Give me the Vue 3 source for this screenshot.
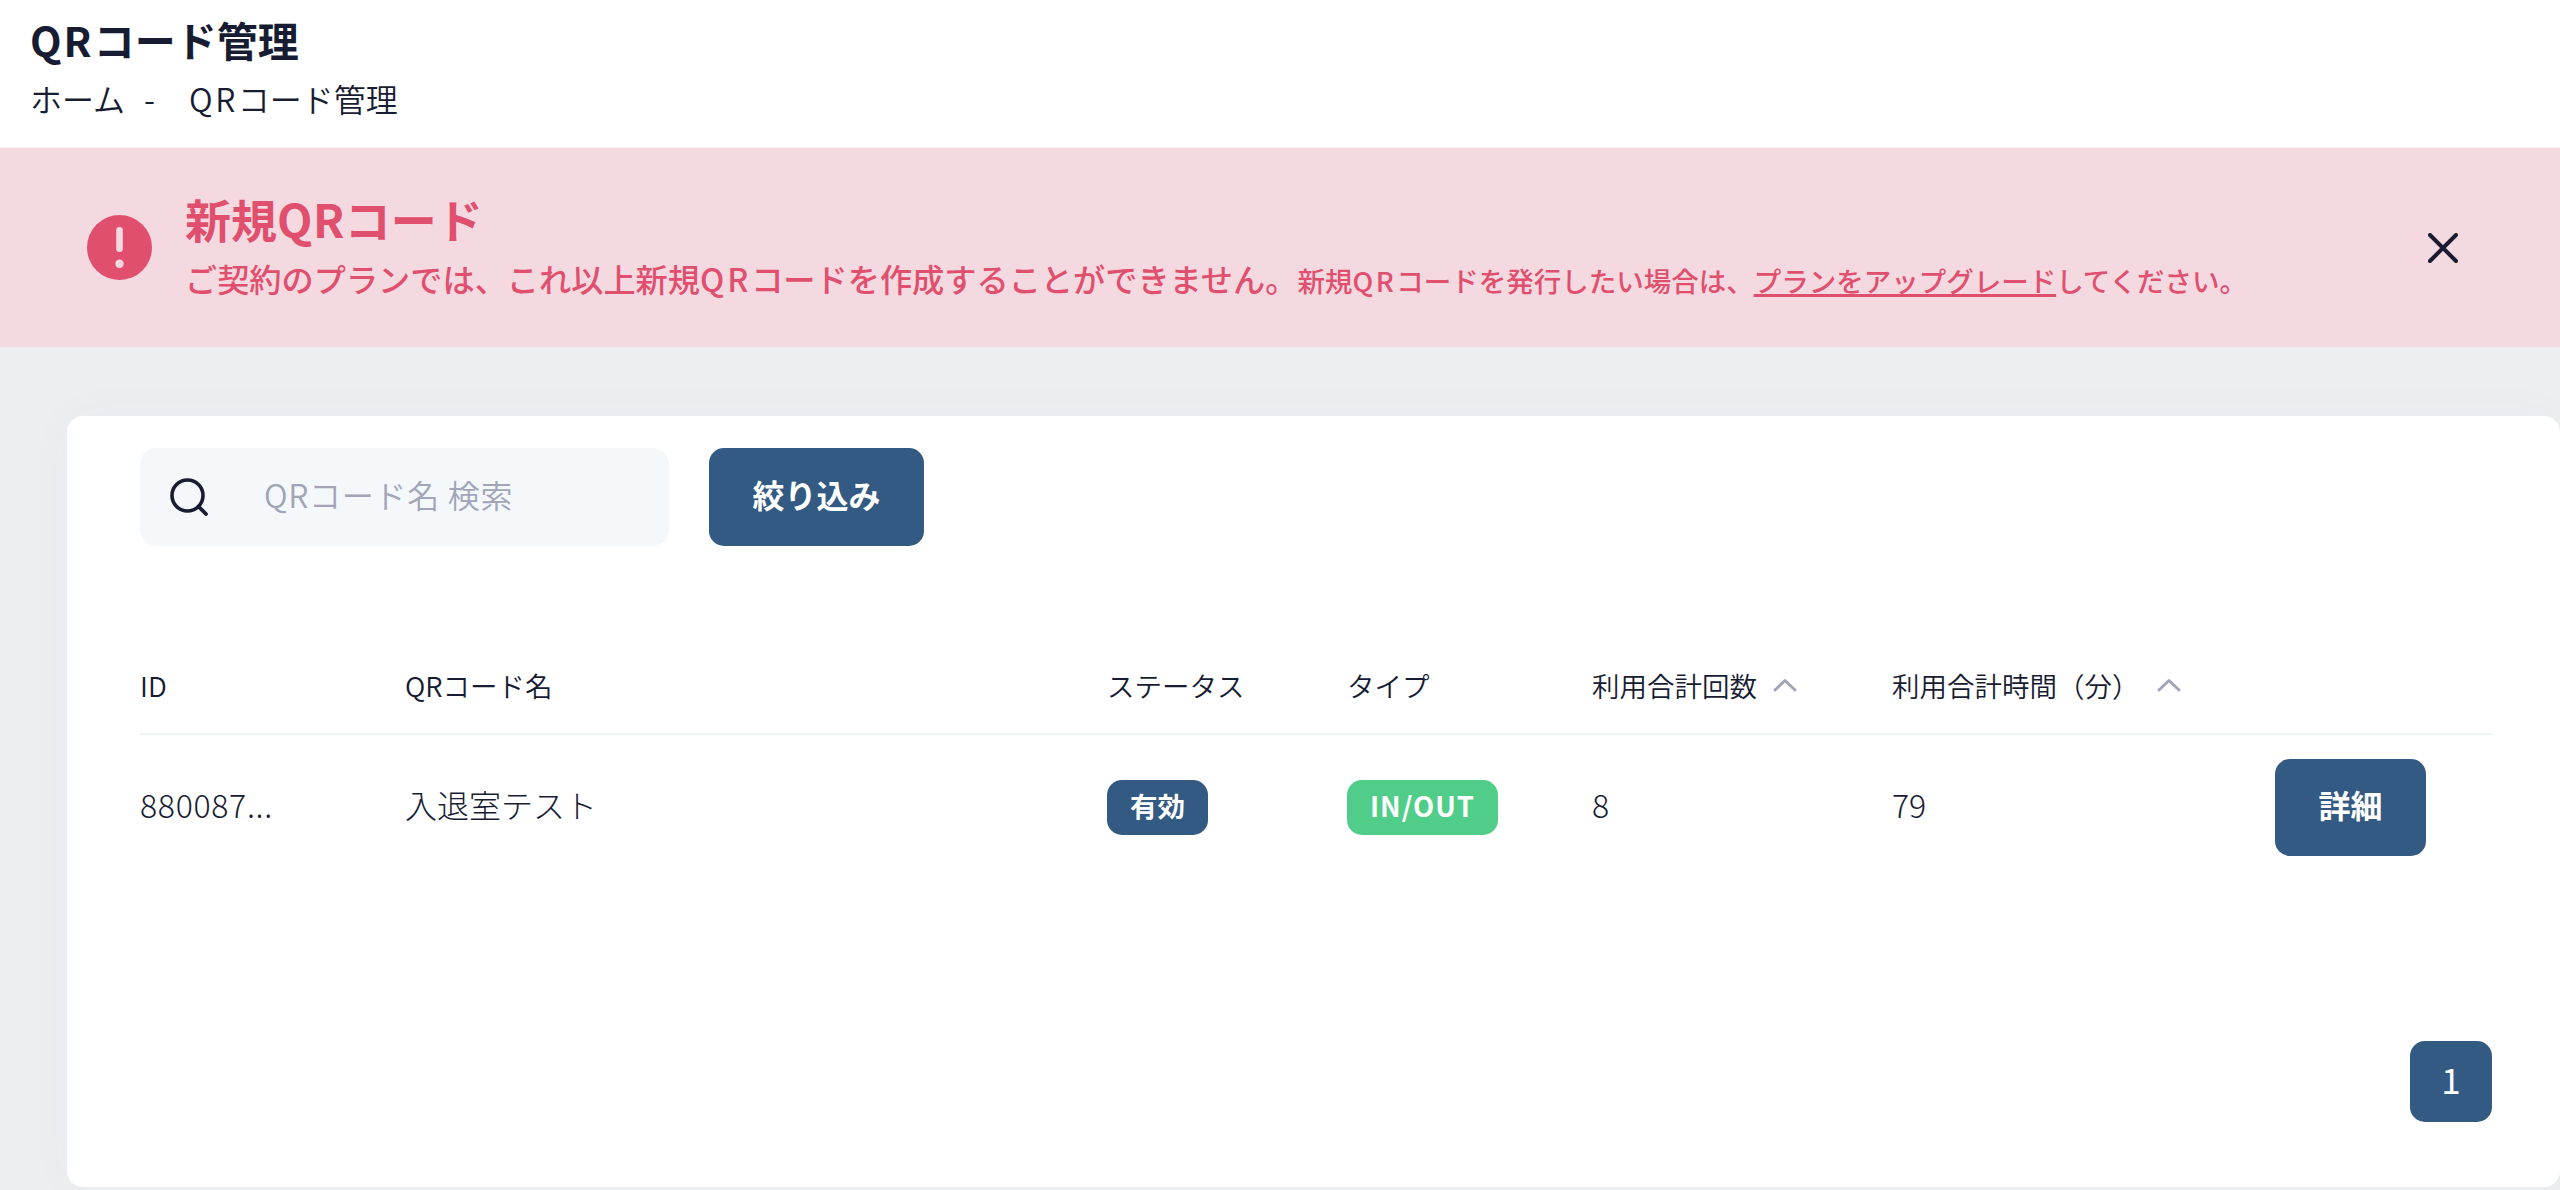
<script setup>
import { ref } from 'vue';

const showAlert = ref(true)
const search = ref('')
const page = ref(1)

const columns = [
    { key: 'id', label: 'ID' },
    { key: 'name', label: 'QRコード名' },
    { key: 'status', label: 'ステータス' },
    { key: 'type', label: 'タイプ' },
    { key: 'count', label: '利用合計回数', sort: true },
    { key: 'minutes', label: '利用合計時間（分）', sort: true },
    { key: 'action', label: '' }
]

const rows = ref([
    { id: '880087...', name: '入退室テスト', status: '有効', type: 'IN/OUT', count: 8, minutes: 79 }
])

const closeAlert = () => {
    showAlert.value = false
}
</script>

<template>
    <div class="page">
        <header class="header">
            <h1><span class="latin">QR</span>コード管理</h1>
            <nav class="breadcrumb">
                <span>ホーム</span>
                <span class="dash">-</span>
                <span><span class="latin">QR</span>コード管理</span>
            </nav>
        </header>

        <section class="alert" v-if="showAlert">
            <svg class="alert__icon" viewBox="0 0 65 65">
                <circle cx="32.5" cy="32.5" r="32.5" fill="#e0506e" />
                <rect x="29.2" y="12" width="6.6" height="25" rx="3.3" fill="#f5d9e1" />
                <circle cx="32.5" cy="48.7" r="4.2" fill="#f5d9e1" />
            </svg>
            <div class="alert__body">
                <h2>新規<span class="latin">QR</span>コード</h2>
                <p>ご契約のプランでは、これ以上新規<span class="latin">QR</span>コードを作成することができません。<small>新規<span class="latin">QR</span>コードを発行したい場合は、<a>プランをアップグレード</a>してください。</small></p>
            </div>
            <button type="button" class="alert__close" @click="closeAlert">
                <svg viewBox="0 0 30 30">
                    <path d="M2 2 L28 28 M28 2 L2 28" fill="none" stroke="#181c32" stroke-width="4" stroke-linecap="round" />
                </svg>
            </button>
        </section>

        <main class="card">
            <div class="toolbar">
                <label class="search">
                    <svg viewBox="0 0 38 38">
                        <circle cx="17.5" cy="17.5" r="15.5" fill="none" stroke="#181c32" stroke-width="3.6" />
                        <path d="M28.5 28.5 L36 36" fill="none" stroke="#181c32" stroke-width="3.8" stroke-linecap="round" />
                    </svg>
                    <input v-model="search" type="text" placeholder="QRコード名 検索">
                </label>
                <button type="button" class="btn btn-filter">絞り込み</button>
            </div>

            <div class="table">
                <div class="row row--head">
                    <div v-for="col in columns" :key="col.key" class="cell">
                        {{ col.label }}
                        <svg v-if="col.sort" class="sort" :class="'sort--' + col.key" viewBox="0 0 24 14">
                            <path d="M2 12 L12 2.5 L22 12" fill="none" stroke="#a1a5b7" stroke-width="3" stroke-linecap="round" stroke-linejoin="round" />
                        </svg>
                    </div>
                </div>
                <div v-for="row in rows" :key="row.id" class="row">
                    <div class="cell cell--id">{{ row.id }}</div>
                    <div class="cell cell--text">{{ row.name }}</div>
                    <div class="cell"><span class="badge">{{ row.status }}</span></div>
                    <div class="cell"><span class="badge badge--green">{{ row.type }}</span></div>
                    <div class="cell cell--text">{{ row.count }}</div>
                    <div class="cell cell--text">{{ row.minutes }}</div>
                    <div class="cell"><button type="button" class="btn btn-detail">詳細</button></div>
                </div>
            </div>

            <div class="pager">
                <button type="button" class="pager__item">{{ page }}</button>
            </div>
        </main>
    </div>
</template>

<style>
    body {
        margin: 0;
        background: #ebeff2;
        overflow: hidden;
    }
</style>

<style scoped>
    * {
        box-sizing: border-box;
    }
    .page {
        width: 2560px;
        height: 1190px;
        overflow: hidden;
        background: #ebeff2;
        color: #181c32;
        font-family: "Noto Sans CJK JP", sans-serif;
        font-weight: 300;
        font-size: 32px;
    }
    h1, h2, p {
        margin: 0;
    }
    button {
        border: 0;
        padding: 0;
        font-family: inherit;
    }
    .latin {
        letter-spacing: 0.08em;
    }
    .header {
        height: 148px;
        padding: 9px 0 0 30px;
        border-bottom: 1px solid #fbecf1;
        background: #fff;
    }
    h1 {
        font-size: 41px;
        line-height: 60px;
        font-weight: 700;
    }
    h1 .latin {
        letter-spacing: 0.05em;
    }
    .breadcrumb {
        display: flex;
        padding-top: 5px;
        line-height: 48px;
        font-weight: 350;
    }
    .dash {
        margin: 0 34px 0 19px;
    }
    .alert {
        display: flex;
        align-items: center;
        height: 199px;
        padding: 0 102px 0 87px;
        background: #f5d9e1;
        color: #e0506e;
    }
    .alert__icon {
        width: 65px;
        height: 65px;
        margin-right: 33px;
    }
    .alert__body {
        flex: 1;
        margin-top: -6px;
        white-space: nowrap;
    }
    .alert h2 {
        font-size: 46px;
        line-height: 64px;
        font-weight: 700;
    }
    .alert h2 .latin {
        letter-spacing: 0.01em;
    }
    .alert p {
        margin-top: 4px;
        font-size: 32.2px;
        line-height: 48px;
        font-weight: 500;
    }
    .alert p .latin {
        letter-spacing: 0.09em;
    }
    .alert small {
        font-size: 27.5px;
    }
    .alert a {
        text-decoration: underline;
        text-decoration-thickness: 3px;
    }
    .alert__close {
        width: 30px;
        height: 30px;
        background: none;
    }
    .alert__close svg {
        display: block;
        width: 30px;
        height: 30px;
    }
    .card {
        display: flex;
        flex-direction: column;
        height: 771px;
        margin: 69px 0 0 67px;
        padding: 32px 68px 65px 73px;
        border-radius: 16px;
        background: #fff;
        box-shadow: 0 0 50px rgba(82, 63, 105, 0.03);
    }
    .toolbar {
        display: flex;
        gap: 40px;
    }
    .search {
        display: flex;
        align-items: center;
        width: 529px;
        height: 98px;
        padding-left: 30px;
        border-radius: 16px;
        background: #f4f8fb;
    }
    .search svg {
        width: 38px;
        height: 38px;
        margin-right: 56px;
    }
    .search input {
        width: 380px;
        border: 0;
        padding: 0 0 6px;
        outline: none;
        background: none;
        font: inherit;
        font-weight: 350;
        letter-spacing: 0.7px;
    }
    .search input::placeholder {
        color: #a1a5b7;
    }
    .btn {
        padding-bottom: 6px;
        border-radius: 15px;
        background: #335a82;
        color: #fff;
        font-size: 32px;
        font-weight: 600;
    }
    .btn-filter {
        width: 215px;
        height: 98px;
    }
    .btn-detail {
        width: 151px;
        height: 97px;
    }
    .table {
        margin-top: 94px;
    }
    .row {
        display: grid;
        grid-template-columns: 265px 702px 240px 245px 300px 383px 1fr;
        align-items: center;
        height: 144px;
    }
    .row--head {
        height: 95px;
        padding-bottom: 3px;
        border-bottom: 2px solid #eef3f7;
        font-size: 27.5px;
        font-weight: 350;
    }
    .cell {
        display: flex;
        align-items: center;
        white-space: nowrap;
    }
    .cell--id, .cell--text {
        padding-bottom: 7px;
    }
    .cell--id {
        letter-spacing: 0.7px;
    }
    .sort {
        width: 24px;
        height: 14px;
        margin: 0 0 1px 16px;
    }
    .sort--minutes {
        margin-left: 17px;
    }
    .badge {
        height: 55px;
        padding: 0 23px;
        border-radius: 15px;
        background: #335a82;
        color: #fff;
        font-size: 27.5px;
        line-height: 51px;
        font-weight: 600;
    }
    .badge--green {
        background: #50cd89;
        letter-spacing: 1px;
    }
    .pager {
        display: flex;
        justify-content: flex-end;
        margin-top: auto;
    }
    .pager__item {
        width: 82px;
        height: 81px;
        padding-bottom: 6px;
        border-radius: 15px;
        background: #335a82;
        color: #fff;
        font-size: 35px;
        font-weight: 400;
    }
</style>
